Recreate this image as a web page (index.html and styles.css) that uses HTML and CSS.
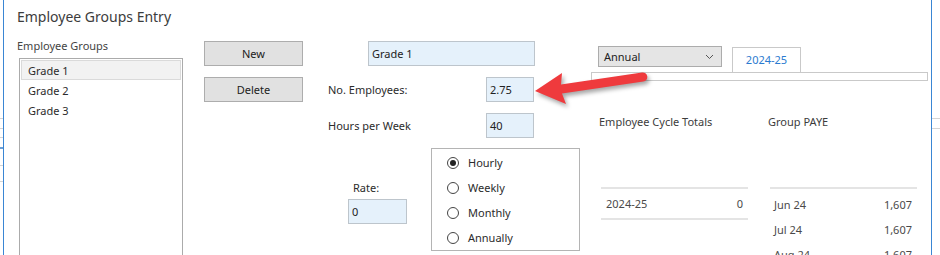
FILE: index.html
```html
<!DOCTYPE html>
<html lang="en">
<head>
  <meta charset="UTF-8" />
  <meta name="viewport" content="width=device-width, initial-scale=1.0" />
  <title>Employee Groups Entry</title>
  <link rel="stylesheet" href="styles.css">
</head>
<body>
  <div class="screen">
    <div class="backdrop-left">
      <i class="tick t1"></i>
      <i class="tick t2"></i>
      <i class="tick t3"></i>
      <i class="tick t4 blue"></i>
      <i class="tick t5"></i>
      <i class="tick t6"></i>
    </div>

    <div class="window">
      <h1 class="title">Employee Groups Entry</h1>
      <div class="content">
        <section class="groups">
          <div class="caption">Employee Groups</div>
          <ul class="group-list">
            <li class="selected">Grade 1</li>
            <li>Grade 2</li>
            <li>Grade 3</li>
          </ul>
        </section>

        <div class="actions">
          <button class="btn">New</button>
          <button class="btn">Delete</button>
        </div>

        <section class="details">
          <div class="field">
            <div class="textbox name">Grade 1</div>
          </div>
          <div class="field">
            <span class="field-label">No. Employees:</span>
            <div class="textbox short">2.75</div>
          </div>
          <div class="field">
            <span class="field-label">Hours per Week</span>
            <div class="textbox short">40</div>
          </div>
          <div class="rate-row">
            <div class="rate">
              <span class="rate-label">Rate:</span>
              <div class="textbox rate-box">0</div>
            </div>
            <div class="period">
              <div class="radio checked"><span class="dot"></span>Hourly</div>
              <div class="radio"><span class="dot"></span>Weekly</div>
              <div class="radio"><span class="dot"></span>Monthly</div>
              <div class="radio"><span class="dot"></span>Annually</div>
            </div>
          </div>
        </section>

        <section class="summary">
          <div class="period-bar">
            <div class="select">
              <span>Annual</span>
              <svg class="chevron" width="9" height="6" viewBox="0 0 9 6"><path d="M1 1 L4.5 4.5 L8 1" fill="none" stroke="#555" stroke-width="1"/></svg>
            </div>
            <div class="tab">2024-25</div>
          </div>
          <div class="tab-panel"></div>

          <div class="tables">
            <div class="table">
              <div class="table-head">Employee Cycle Totals</div>
              <div class="rows cycle-rows">
                <div class="row"><span>2024-25</span><span>0</span></div>
              </div>
            </div>
            <div class="table paye">
              <div class="table-head">Group PAYE</div>
              <div class="rows paye-rows">
                <div class="row"><span>Jun 24</span><span>1,607</span></div>
                <div class="row"><span>Jul 24</span><span>1,607</span></div>
                <div class="row"><span>Aug 24</span><span>1,607</span></div>
              </div>
            </div>
          </div>
        </section>
      </div>
    </div>

    <div class="backdrop-right">
      <i class="tick r1"></i>
      <i class="tick r2"></i>
    </div>

    <!-- red callout arrow drawn over the form -->
    <svg class="callout" width="120" height="45" viewBox="530 68 120 45">
      <path d="M535 91 L562 73 L561 84.5 L642 72.5 A4.6 4.6 0 0 1 643.4 81.6 L562 93.5 L566 104 Z" fill="#ef3a3d"/>
    </svg>
  </div>
</body>
</html>
```

FILE: styles.css
```css
* {
  box-sizing: border-box;
}
body {
  margin: 0;
  background: #fff;
  font-family: "Noto Sans", Arial, sans-serif;
  font-size: 11px;
  color: #2b2b2b;
}
.screen {
  position: relative;
  width: 940px;
  height: 255px;
  display: flex;
  overflow: hidden;
  background: #fff;
}

/* bits of the app behind the dialog */
.backdrop-left {
  width: 3px;
  display: flex;
  flex-direction: column;
  padding-top: 118px;
}
.backdrop-right {
  width: 8px;
  display: flex;
  flex-direction: column;
  padding-top: 118px;
}
.tick {
  display: block;
  height: 1px;
  background: #d4d4d4;
}
.t1 { margin-bottom: 9px; }
.t2 { margin-bottom: 8px; }
.t3 { margin-bottom: 9px; }
.t4 { margin-bottom: 16px; height: 2px; }
.t5 { margin-bottom: 15px; }
.blue { background: #6b9fd6; }
.r1 { margin-bottom: 9px; }

.window {
  width: 929px;
  height: 255px;
  border-left: 1px solid #3a86d4;
  border-right: 1px solid #3a86d4;
}
.title {
  margin: 0;
  padding: 7px 0 0 13px;
  height: 38px;
  font-size: 14px;
  font-weight: normal;
  line-height: 20px;
  color: #3c3c3c;
}
.content {
  display: flex;
  align-items: flex-start;
}

/* left list */
.groups {
  margin-left: 13px;
  width: 166px;
}
.caption {
  line-height: 16px;
  margin-bottom: 4px;
  color: #444;
}
.group-list {
  list-style: none;
  margin: 0 0 0 2px;
  padding: 1px;
  height: 210px;
  border: 1px solid #ababab;
}
.group-list li {
  height: 20px;
  line-height: 19px;
  padding-left: 6px;
  border: 1px solid transparent;
}
.group-list li.selected {
  background: #f2f2f2;
  border-color: #dadada;
}

/* buttons */
.actions {
  margin: 3px 0 0 21px;
  width: 99px;
  display: flex;
  flex-direction: column;
  gap: 11px;
}
.btn {
  height: 25px;
  padding: 0;
  font: inherit;
  color: #222;
  background: #e1e1e1;
  border: 1px solid #adadad;
}

/* middle form */
.details {
  margin: 3px 0 0 25px;
  width: 263px;
  display: flex;
  flex-direction: column;
  gap: 11px;
}
.field {
  display: flex;
  align-items: center;
  height: 25px;
}
.field-label {
  width: 158px;
}
.textbox {
  height: 25px;
  line-height: 23px;
  padding-left: 3px;
  background: #e5f1fb;
  border: 1px solid #bdc5cc;
  color: #222;
}
.textbox.name {
  margin-left: 40px;
  width: 167px;
}
.textbox.short {
  width: 48px;
}
.rate-row {
  display: flex;
  margin-top: -1px;
}
.rate {
  margin-left: 20px;
  width: 59px;
  display: flex;
  flex-direction: column;
}
.rate-label {
  margin-top: 32px;
  padding-left: 5px;
  line-height: 16px;
}
.textbox.rate-box {
  margin-top: 3px;
}
.period {
  margin-left: 24px;
  width: 149px;
  height: 103px;
  padding: 1px 0 0 15px;
  border: 1px solid #b4b4b4;
}
.radio {
  display: flex;
  align-items: center;
  gap: 9px;
  height: 25px;
}
.dot {
  width: 12px;
  height: 12px;
  border: 1px solid #444;
  border-radius: 50%;
  display: flex;
  align-items: center;
  justify-content: center;
}
.radio.checked .dot::after {
  content: "";
  width: 6px;
  height: 6px;
  border-radius: 50%;
  background: #222;
}

/* right summary */
.summary {
  width: 337px;
  margin-top: 8px;
}
.period-bar {
  display: flex;
  align-items: flex-start;
  height: 26px;
}
.select {
  margin-left: 7px;
  width: 124px;
  height: 21px;
  padding: 0 7px 0 5px;
  display: flex;
  align-items: center;
  justify-content: space-between;
  background: #e5e5e5;
  border: 1px solid #acacac;
  color: #222;
}
.tab {
  margin: 1px 0 0 10px;
  width: 69px;
  height: 25px;
  line-height: 24px;
  text-align: center;
  color: #2b7bd0;
  border: 1px solid #c9c9c9;
  border-bottom: none;
}
.tab-panel {
  height: 9px;
  border: 1px solid #c9c9c9;
}
.tables {
  display: flex;
  margin-top: 33px;
}
.table {
  margin-left: 8px;
  width: 149px;
}
.table.paye {
  margin-left: 20px;
}
.table-head {
  line-height: 16px;
  color: #3c3c3c;
}
.rows {
  margin: 57px 0 0 2px;
  border-top: 2px solid #e4e4e4;
  color: #4a4a4a;
}
.cycle-rows .row {
  height: 31px;
  padding: 0 5px 1px 5px;
  border-bottom: 2px solid #e4e4e4;
}
.paye-rows {
  padding-top: 3px;
}
.paye-rows .row {
  height: 25px;
  padding: 0 5px 0 4px;
}
.row {
  display: flex;
  align-items: center;
  justify-content: space-between;
}

.callout {
  position: absolute;
  left: 530px;
  top: 68px;
  overflow: visible;
  filter: drop-shadow(2px 3px 2px rgba(0, 0, 0, 0.35));
}
```
